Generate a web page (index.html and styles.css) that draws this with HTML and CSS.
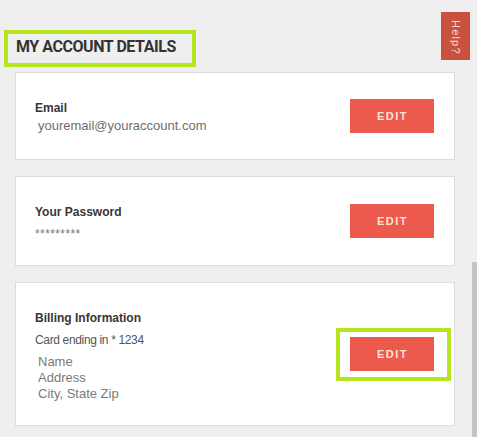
FILE: index.html
```html
<!DOCTYPE html>
<html>
<head>
<meta charset="utf-8">
<link rel="stylesheet" href="styles.css">
</head>
<body>
<div class="page">
  <header class="head">
    <h1 class="title">MY ACCOUNT DETAILS</h1>
  </header>
  <main class="cards">
    <section class="card">
      <div class="info">
        <div class="label">Email</div>
        <div class="value email">youremail@youraccount.com</div>
      </div>
      <button class="edit">EDIT</button>
    </section>
    <section class="card">
      <div class="info">
        <div class="label">Your Password</div>
        <div class="stars">*********</div>
      </div>
      <button class="edit">EDIT</button>
    </section>
    <section class="card">
      <div class="info">
        <div class="label">Billing Information</div>
        <div class="cardno">Card ending in * 1234</div>
        <div class="value address">Name<br>Address<br>City, State Zip</div>
      </div>
      <span class="marked"><button class="edit">EDIT</button></span>
    </section>
  </main>
  <a class="help">Help?</a>
  <div class="scroll-thumb"></div>
</div>
</body>
</html>
```

FILE: styles.css
```css
html, body {
  margin: 0;
  padding: 0;
  background: #efefef;
}
.page {
  position: relative;
  width: 477px;
  height: 437px;
  overflow: hidden;
  background: #efefef;
  font-family: "Liberation Sans", Arial, sans-serif;
}
.head {
  padding: 30px 0 0 4px;
}
.title {
  display: inline-block;
  margin: 0;
  border: 4px solid #b5e61d;
  padding: 3px 16px 6px 8px;
  font-family: Roboto, "Liberation Sans", sans-serif;
  font-weight: 700;
  font-size: 16px;
  line-height: 20px;
  letter-spacing: -0.45px;
  color: #333333;
}
.cards {
  display: flex;
  flex-direction: column;
  gap: 16px;
  margin: 5px 0 0 15px;
  width: 440px;
}
.card {
  display: flex;
  align-items: center;
  justify-content: space-between;
  box-sizing: border-box;
  width: 440px;
  background: #ffffff;
  border: 1px solid #dddddd;
  padding: 23px 20px 23px 19px;
}
.info {
  padding-top: 4px;
}
.label {
  font-weight: 700;
  font-size: 12px;
  line-height: 16px;
  color: #363636;
}
.value {
  font-size: 13px;
  color: #6e6e6e;
  padding-left: 3px;
}
.email {
  line-height: 20px;
}
.stars {
  font-size: 12px;
  line-height: 16px;
  padding-top: 6px;
  color: #777777;
  letter-spacing: 0.4px;
}
.cardno {
  margin-top: 6px;
  font-size: 12px;
  line-height: 16px;
  letter-spacing: -0.35px;
  color: #555555;
}
.address {
  margin-top: 6px;
  line-height: 16px;
  color: #7a7a7a;
}
.edit {
  display: block;
  width: 84px;
  height: 34px;
  border: 0;
  margin: 0;
  padding: 0 0 0 1px;
  background: #eb5a4c;
  color: #fde3d6;
  font-family: "Liberation Sans", Arial, sans-serif;
  font-weight: 700;
  font-size: 11px;
  letter-spacing: 1.5px;
}
.marked {
  position: relative;
  display: block;
}
.marked::after {
  content: "";
  position: absolute;
  top: -9px;
  right: -17px;
  bottom: -10px;
  left: -14px;
  border: 4px solid #b5e61d;
}
.help {
  position: absolute;
  top: 12px;
  left: 441px;
  width: 29px;
  height: 48px;
  box-sizing: border-box;
  padding-top: 8px;
  background: #c9523f;
  color: #f6d9cf;
  writing-mode: vertical-rl;
  display: flex;
  align-items: center;
  font-family: "Liberation Sans", Arial, sans-serif;
  font-size: 11px;
  letter-spacing: 1.2px;
}
.scroll-thumb {
  position: absolute;
  top: 262px;
  left: 472px;
  width: 5px;
  height: 175px;
  background: #c4c4c4;
}
```
